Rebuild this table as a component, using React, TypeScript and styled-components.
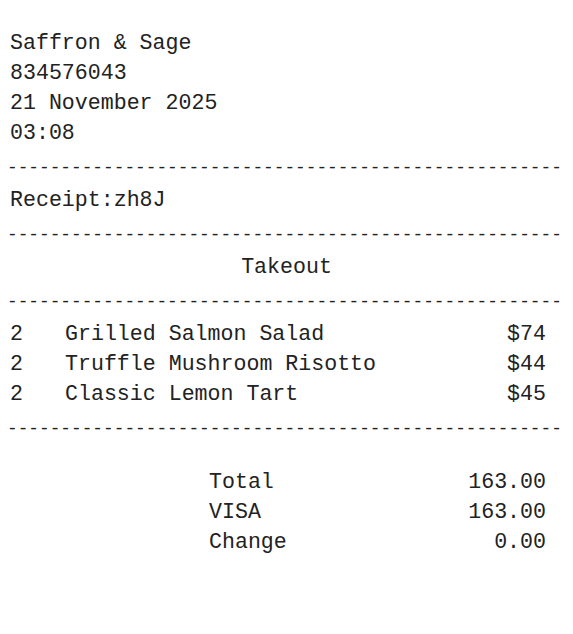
import React from 'react';
import styled, { createGlobalStyle } from 'styled-components';

interface IItem {
  qty: number;
  name: string;
  price: number;
}

interface ITotal {
  label: string;
  value: string;
}

const items: IItem[] = [
  { qty: 2, name: 'Grilled Salmon Salad', price: 74 },
  { qty: 2, name: 'Truffle Mushroom Risotto', price: 44 },
  { qty: 2, name: 'Classic Lemon Tart', price: 45 },
];

const totals: ITotal[] = [
  { label: 'Total', value: '163.00' },
  { label: 'VISA', value: '163.00' },
  { label: 'Change', value: '0.00' },
];

const GlobalStyle = createGlobalStyle`
  body {
    margin: 0;
    background: #ffffff;
  }
`;

const StyledReceipt = styled.div`
  padding: 28px 10px 40px;
  font-family: "Liberation Mono", "Courier New", monospace;
  font-size: 21.6px;
  line-height: 30px;
  color: #222;
`;

const StyledLine = styled.div`
  white-space: pre;
`;

const StyledDivider = styled.div`
  margin-left: -3px;
  padding-top: 3px;
  font-size: 17.8px;
  line-height: 34px;
  white-space: nowrap;
`;

const StyledCentered = styled.div`
  text-align: center;
`;

const StyledItemRow = styled.div`
  display: grid;
  grid-template-columns: 55px 1fr auto;
  padding-right: 17px;
`;

const StyledTotals = styled.div`
  margin: 21px 0 0 199px;
  padding-right: 17px;
`;

const StyledTotalRow = styled.div`
  display: grid;
  grid-template-columns: 1fr auto;
`;

const DASHES = '-'.repeat(52);

/**
 * Simple till receipt.
 */
const App = () => {
  return <>
    <GlobalStyle />
    <StyledReceipt>
      <StyledLine>Saffron &amp; Sage</StyledLine>
      <StyledLine>834576043</StyledLine>
      <StyledLine>21 November 2025</StyledLine>
      <StyledLine>03:08</StyledLine>
      <StyledDivider>{DASHES}</StyledDivider>
      <StyledLine>Receipt:zh8J</StyledLine>
      <StyledDivider>{DASHES}</StyledDivider>
      <StyledCentered>Takeout</StyledCentered>
      <StyledDivider>{DASHES}</StyledDivider>
      {items.map((i, index) => {
        return <StyledItemRow key={index}>
          <span>{i.qty}</span>
          <span>{i.name}</span>
          <span>${i.price}</span>
        </StyledItemRow>
      })}
      <StyledDivider>{DASHES}</StyledDivider>
      <StyledTotals>
        {totals.map(t => {
          return <StyledTotalRow key={t.label}>
            <span>{t.label}</span>
            <span>{t.value}</span>
          </StyledTotalRow>
        })}
      </StyledTotals>
    </StyledReceipt>
  </>
}

export default App
